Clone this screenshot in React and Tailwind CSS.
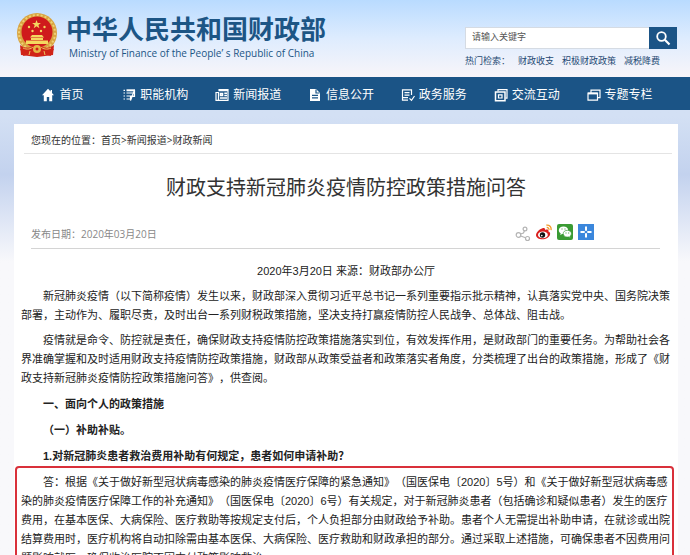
import React from 'react';
import clsx from 'clsx';

const NAV_ITEMS = [
  { icon: 'home', label: '首页' },
  { icon: 'list', label: '职能机构' },
  { icon: 'news', label: '新闻报道' },
  { icon: 'file', label: '信息公开' },
  { icon: 'service', label: '政务服务' },
  { icon: 'chat', label: '交流互动' },
  { icon: 'folder', label: '专题专栏' }
];

const HOT_WORDS = ['财政收支', '积极财政政策', '减税降费'];

const INTRO = [
  '新冠肺炎疫情（以下简称疫情）发生以来，财政部深入贯彻习近平总书记一系列重要指示批示精神，认真落实党中央、国务院决策部署，主动作为、履职尽责，及时出台一系列财税政策措施，坚决支持打赢疫情防控人民战争、总体战、阻击战。',
  '疫情就是命令、防控就是责任，确保财政支持疫情防控政策措施落实到位，有效发挥作用，是财政部门的重要任务。为帮助社会各界准确掌握和及时适用财政支持疫情防控政策措施，财政部从政策受益者和政策落实者角度，分类梳理了出台的政策措施，形成了《财政支持新冠肺炎疫情防控政策措施问答》，供查阅。'
];

const HEADINGS = [
  '一、面向个人的政策措施',
  '（一）补助补贴。',
  '1.对新冠肺炎患者救治费用补助有何规定，患者如何申请补助？'
];

const ANSWER =
  '答：根据《关于做好新型冠状病毒感染的肺炎疫情医疗保障的紧急通知》（国医保电〔2020〕5号）和《关于做好新型冠状病毒感染的肺炎疫情医疗保障工作的补充通知》（国医保电〔2020〕6号）有关规定，对于新冠肺炎患者（包括确诊和疑似患者）发生的医疗费用，在基本医保、大病保险、医疗救助等按规定支付后，个人负担部分由财政给予补助。患者个人无需提出补助申请，在就诊或出院结算费用时，医疗机构将自动扣除需由基本医保、大病保险、医疗救助和财政承担的部分。通过采取上述措施，可确保患者不因费用问题影响就医，确保收治医院不因支付政策影响救治。';

function NavIcon({ name }) {
  return (
    <svg
      viewBox="0 0 14 14"
      className="w-3.5 h-3.5 shrink-0"
      fill="none"
      stroke="currentColor"
      strokeWidth="1.2"
      aria-hidden="true"
    >
      {name === 'home' && (
        <path
          d="M7 .8 1 7.200h1.800v6h3V9h2.400v4.200h3v-6H13l-2-2.100V2H9.600v1.600z"
          fill="currentColor"
          stroke="none"
        />
      )}
      {name === 'list' && (
        <>
          <path d="M1.500 2.300h1.500M1.500 5h1.500M1.500 8h1.500M1.500 11h1.500M4.500 5h8M4.500 8h8M4.500 11h3.500" />
          <path d="M4.500 2.300h8.500" strokeWidth="2" />
          <path d="M12.500 2v6.500H8.500v4z" />
        </>
      )}
      {name === 'news' && (
        <>
          <path d="M3.500 1.700H13v10.600H1V4.500h2.500v7.500" />
          <path d="M3.500 2.500H13M5.500 5.500h2v2h-2zM9.300 5.300H12M9.300 7.500H12M5 10h7" strokeWidth="1.600" />
        </>
      )}
      {name === 'file' && (
        <>
          <path d="M2 1h6l4 4v8H2z" fill="currentColor" stroke="none" />
          <path d="M4 7.300h6M4 9.900h6M8 1.500V5h3.500" stroke="#1b5486" />
        </>
      )}
      {name === 'service' && (
        <>
          <path d="M10.500 7V1.800h-9v10.400H7M3.500 4.700h5M3.500 7.200h5M1.500 9.700H7" />
          <path d="m8.500 10.300 2 2L13.500 8" />
        </>
      )}
      {name === 'chat' && (
        <>
          <path d="M4 3.200V1.600h9v8.600h-1.500" />
          <path d="M1.500 4H11v8.700H1.500z" strokeWidth="1.500" />
          <path d="M4.500 6.800h3.500v3.200h-3.500z" />
        </>
      )}
      {name === 'folder' && (
        <>
          <path d="M1 5h9.500v7.200H1zM4 4.500V2.200h9v7.500h-2" />
          <path d="M1 5.500h9.500" strokeWidth="1.800" />
        </>
      )}
    </svg>
  );
}

function Emblem() {
  return (
    <svg viewBox="0 0 42 46" className="w-[42px] h-[46px] shrink-0" aria-hidden="true">
      <path d="M7 34h28l3 4-4 1 1 5-8-2-6 2-6-2-8 2 1-5-4-1z" fill="#d02418" />
      <circle cx="21" cy="21" r="20" fill="#d9a441" />
      <circle cx="21" cy="21" r="18" fill="none" stroke="#efcf74" strokeDasharray="2 2" strokeWidth="2" />
      <circle cx="21" cy="20" r="15.500" fill="#cf1a1c" />
      <path d="m20.500 8 1.200 3h3.200l-2.500 2 1 3.200-2.900-2-2.800 2 1-3.200-2.600-2h3.300z" fill="#f4d860" />
      <g fill="#f4d860">
        <circle cx="13" cy="15" r="1.200" />
        <circle cx="28.500" cy="15" r="1.200" />
        <circle cx="16.500" cy="19" r="1.200" />
        <circle cx="25" cy="19" r="1.200" />
        <path d="M16 23h10l2 2.500H14zM15 26h12v2H15zM10 28.500h22v3.500H10z" />
      </g>
      <path d="M4 33c5 4 11 3 13 1h8c2 2 8 3 13-1l-1 10-8 1-8 1-8-1-8-1z" fill="#d02418" />
      <path d="M7 36c4 2 8 1 10-1M35 36c-4 2-8 1-10-1M13 43l1-4M29 43l-1-4" stroke="#edc25c" fill="none" />
      <circle cx="21" cy="37" r="4" fill="#e6b546" />
      <circle cx="21" cy="37" r="1.500" fill="#d02418" />
    </svg>
  );
}

function SearchBox() {
  return (
    <div className="w-[212px] mt-[27px]">
      <form className="flex h-[22px]" onSubmit={(e) => e.preventDefault()}>
        <input
          type="text"
          aria-label="请输入关键字"
          placeholder="请输入关键字"
          className="flex-1 min-w-0 px-1.5 text-[9px] bg-white border border-[#d5dbe3] border-r-0 placeholder:text-[#555] outline-none"
        />
        <button
          type="submit"
          aria-label="搜索"
          className="flex items-center justify-center w-7 bg-[#1b5486] text-white"
        >
          <svg viewBox="0 0 16 16" className="w-4 h-4" fill="none" stroke="currentColor">
            <circle cx="6.500" cy="6.500" r="4.300" strokeWidth="1.800" />
            <path d="m9.800 9.800 4.700 4.700" strokeWidth="2.200" />
          </svg>
        </button>
      </form>
      <div className="flex mt-1.5 text-[9px] leading-3 text-[#1f4a73] whitespace-nowrap">
        <span className="w-[53px]">热门检索：</span>
        <div className="flex gap-2">
          {HOT_WORDS.map((word) => (
            <a key={word} href="#">
              {word}
            </a>
          ))}
        </div>
      </div>
    </div>
  );
}

function ShareLinks() {
  return (
    <div className="flex items-center gap-[5px]">
      <a href="#" aria-label="分享">
        <svg viewBox="0 0 16 16" className="w-4 h-4 mt-1" fill="none" stroke="#b4b4b4" strokeWidth="1.200">
          <circle cx="3.500" cy="9" r="2.300" />
          <circle cx="10" cy="3" r="1.900" />
          <circle cx="12.500" cy="12.500" r="2" />
          <path d="m5.500 8 3-1 1-2.500M5.700 10l4.900 1.800" />
        </svg>
      </a>
      <a href="#" aria-label="微博">
        <svg viewBox="0 0 16 16" className="w-4 h-4">
          <path d="M6.500 4.300c1.700-.6 3 .1 2.500 1.700 2-.8 4-.4 3.400 1.600 1.500.6 2.100 1.700 1.600 3.200-.8 2.600-4 4.500-7.500 4.500S0 13.500 0 10.900C0 8.500 3.500 5.200 6.500 4.300z" fill="#d9201e" />
          <ellipse cx="6.900" cy="10.900" rx="4.900" ry="3.300" fill="#fff" />
          <circle cx="6.500" cy="11" r="2.700" fill="#111" />
          <circle cx="5.800" cy="11.600" r=".8" fill="#fff" />
          <path d="M10.300 1.200c3-.6 5.400 1.900 4.700 5M10.700 3.500c1.400-.2 2.500 1 2.200 2.400" stroke="#f39a28" strokeWidth="1.300" fill="none" />
        </svg>
      </a>
      <a href="#" aria-label="微信">
        <svg viewBox="0 0 16 16" className="w-4 h-4">
          <rect width="16" height="16" rx="2" fill="#3a9b33" />
          <path d="M6.500 2.500c2.700 0 4.700 1.700 4.700 3.800S9.200 10 6.500 10l-1.300-.1-2 1.200.5-1.800C2.500 8.600 1.800 7.500 1.800 6.300c0-2.100 2-3.800 4.700-3.800z" fill="#fff" />
          <path d="M10.300 6.300c2.300 0 4.100 1.500 4.100 3.400 0 1-.5 1.900-1.400 2.500l.4 1.500-1.600-.8-1.500.2c-2.300 0-4.100-1.500-4.100-3.400s1.800-3.400 4.100-3.400z" fill="#fff" stroke="#3a9b33" strokeWidth=".7" />
          <path d="M4.500 5h1M7.500 5h1M8.500 9h1M11.200 9h1" stroke="#3a9b33" />
        </svg>
      </a>
      <a href="#" aria-label="更多分享">
        <svg viewBox="0 0 16 16" className="w-4 h-4">
          <rect width="16" height="16" fill="#3b87dc" />
          <path d="M8 2.500v4.200M8 9.300v4.200M2.500 8h4.200M9.300 8h4.200" stroke="#fff" strokeWidth="2" />
        </svg>
      </a>
    </div>
  );
}

function Header() {
  return (
    <header>
      <div className="flex justify-between h-[77px] pl-4 pr-[13px] bg-linear-to-b from-[#b9dbff] via-[#deecfe] to-[#f8f5f9]">
        <a href="#" className="flex pt-3 gap-2">
          <Emblem />
          <div className="flex flex-col gap-[3px] pt-1 text-[#1c5585] whitespace-nowrap">
            <div className="text-[26px] leading-7 font-bold">中华人民共和国财政部</div>
            <div className="px-[3px] font-['Open_Sans',sans-serif] text-[10px] leading-3">
              Ministry of Finance of the People’ s Republic of China
            </div>
          </div>
        </a>
        <SearchBox />
      </div>
      <nav className="flex h-[33px] pl-4 pr-6 bg-[#1b5486] text-white">
        {NAV_ITEMS.map(({ icon, label }) => (
          <a
            key={label}
            href="#"
            className="flex flex-1 items-center justify-center gap-1 pt-0.5 text-xs whitespace-nowrap"
          >
            <NavIcon name={icon} />
            {label}
          </a>
        ))}
      </nav>
    </header>
  );
}

function Paragraph({ bold, children }) {
  return <p className={clsx('indent-[22px]', bold && 'font-bold')}>{children}</p>;
}

function Article() {
  return (
    <main className="ml-3.5 mr-3 pt-2 bg-white">
      <div className="ml-2.5 mr-1.5 pl-[7px] pb-1 border-b border-[#e4e4e4] font-['Open_Sans','Noto_Sans_CJK_SC',sans-serif] text-[10px] leading-[17px] text-[#333]">
        您现在的位置：<a href="#">首页</a>&gt;<a href="#">新闻报道</a>&gt;
        <a href="#">财政新闻</a>
      </div>
      <h1 className="mt-5 text-xl leading-7 text-center text-[#333]">
        财政支持新冠肺炎疫情防控政策措施问答
      </h1>
      <div className="flex justify-between ml-[17px] mr-[18px] pt-5 pb-1.5 border-b border-[#d4d4d4]">
        <time className="pt-1 font-['Open_Sans','Noto_Sans_CJK_SC',sans-serif] text-[10px] leading-4 text-[#888]">
          发布日期：2020年03月20日
        </time>
        <div className="pr-[66px]">
          <ShareLinks />
        </div>
      </div>
      <article className="pt-[13px] text-[11px] leading-[19px] text-[#222] [text-spacing-trim:space-all]">
        <p className="text-center">2020年3月20日 来源：财政部办公厅</p>
        <div className="flex flex-col gap-1.5 pt-1.5 px-[7px]">
          {INTRO.map((text) => (
            <Paragraph key={text}>{text}</Paragraph>
          ))}
        </div>
        <div className="flex flex-col gap-[7px] pt-[7px] px-[7px]">
          {HEADINGS.map((text) => (
            <Paragraph key={text} bold>
              {text}
            </Paragraph>
          ))}
        </div>
        <section className="ml-px mr-1 pl-1 pr-px pt-[5px] pb-3 border-2 border-[#d9303a] rounded-sm">
          <Paragraph>{ANSWER}</Paragraph>
        </section>
      </article>
    </main>
  );
}

function App() {
  return (
    <div className="min-h-screen bg-linear-to-b from-[#d3e0f4] from-20% via-[#c3d2ee] via-30% to-[#f8f8fb] to-45% font-['Liberation_Sans','Noto_Sans_CJK_SC',sans-serif]">
      <Header />
      <div className="pt-3.5">
        <Article />
      </div>
    </div>
  );
}

export default App;
